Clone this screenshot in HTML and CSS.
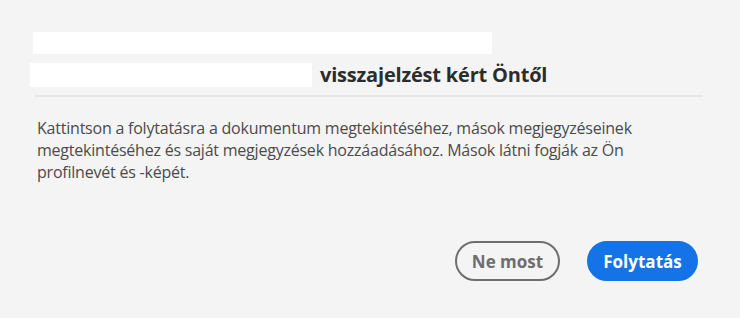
FILE: index.html
```html
<!DOCTYPE html>
<html lang="hu">
<head>
    <meta charset="UTF-8">
    <meta name="viewport" content="width=device-width, initial-scale=1.0">
    <title>Visszajelzés</title>
    <link rel="stylesheet" href="styles.css">
</head>
<body>
    <div class="dialog">
        <div class="dialog-header">
            <div class="mask mask-top"></div>
            <h2 class="title">
                <span class="mask mask-name"></span>
                <span class="title-text">visszajelzést kért Öntől</span>
            </h2>
        </div>
        <hr class="divider">
        <p class="message">Kattintson a folytatásra a dokumentum megtekintéséhez, mások megjegyzéseinek
        megtekintéséhez és saját megjegyzések hozzáadásához. Mások látni fogják az Ön
        profilnevét és -képét.</p>
        <div class="actions">
            <button class="btn btn-secondary">Ne most</button>
            <button class="btn btn-primary">Folytatás</button>
        </div>
    </div>
</body>
</html>
```

FILE: styles.css
```css
html, body {
    margin: 0;
    height: 100%;
}
body {
    background: #f4f4f4;
    font-family: "Open Sans", "Noto Sans", sans-serif;
}
.dialog {
    padding: 32px 37px 0 37px;
}
.dialog-header {
    display: flex;
    flex-direction: column;
}
.mask {
    background: #ffffff;
    display: block;
}
.mask-top {
    width: 459px;
    height: 22px;
    margin-left: -4px;
}
.title {
    display: flex;
    align-items: center;
    margin: 9px 0 0 -7px;
    font-size: 20px;
    font-weight: 700;
    color: #2c2c2c;
    line-height: 24px;
    letter-spacing: -0.2px;
}
.mask-name {
    width: 282px;
    height: 24px;
    margin-right: 8px;
}
.divider {
    border: 0;
    height: 2px;
    background: #e6e6e6;
    margin: 8px -37px 0 -2px;
    width: 668px;
}
.message {
    margin: 20px 0 0 0;
    font-size: 16px;
    line-height: 22px;
    color: #4b4b4b;
    max-width: 660px;
    letter-spacing: -0.22px;
}
.actions {
    display: flex;
    justify-content: flex-end;
    gap: 27px;
    margin: 58px 5px 0 0;
}
.btn {
    height: 40px;
    border-radius: 20px;
    font-family: inherit;
    font-size: 17px;
    font-weight: 700;
    padding: 0 10px;
    cursor: pointer;
}
.btn-secondary {
    background: transparent;
    border: 2px solid #6e6e6e;
    color: #6e6e6e;
    width: 105px;
}
.btn-primary {
    background: #1473e6;
    border: 2px solid #1473e6;
    color: #ffffff;
    width: 111px;
}
```
